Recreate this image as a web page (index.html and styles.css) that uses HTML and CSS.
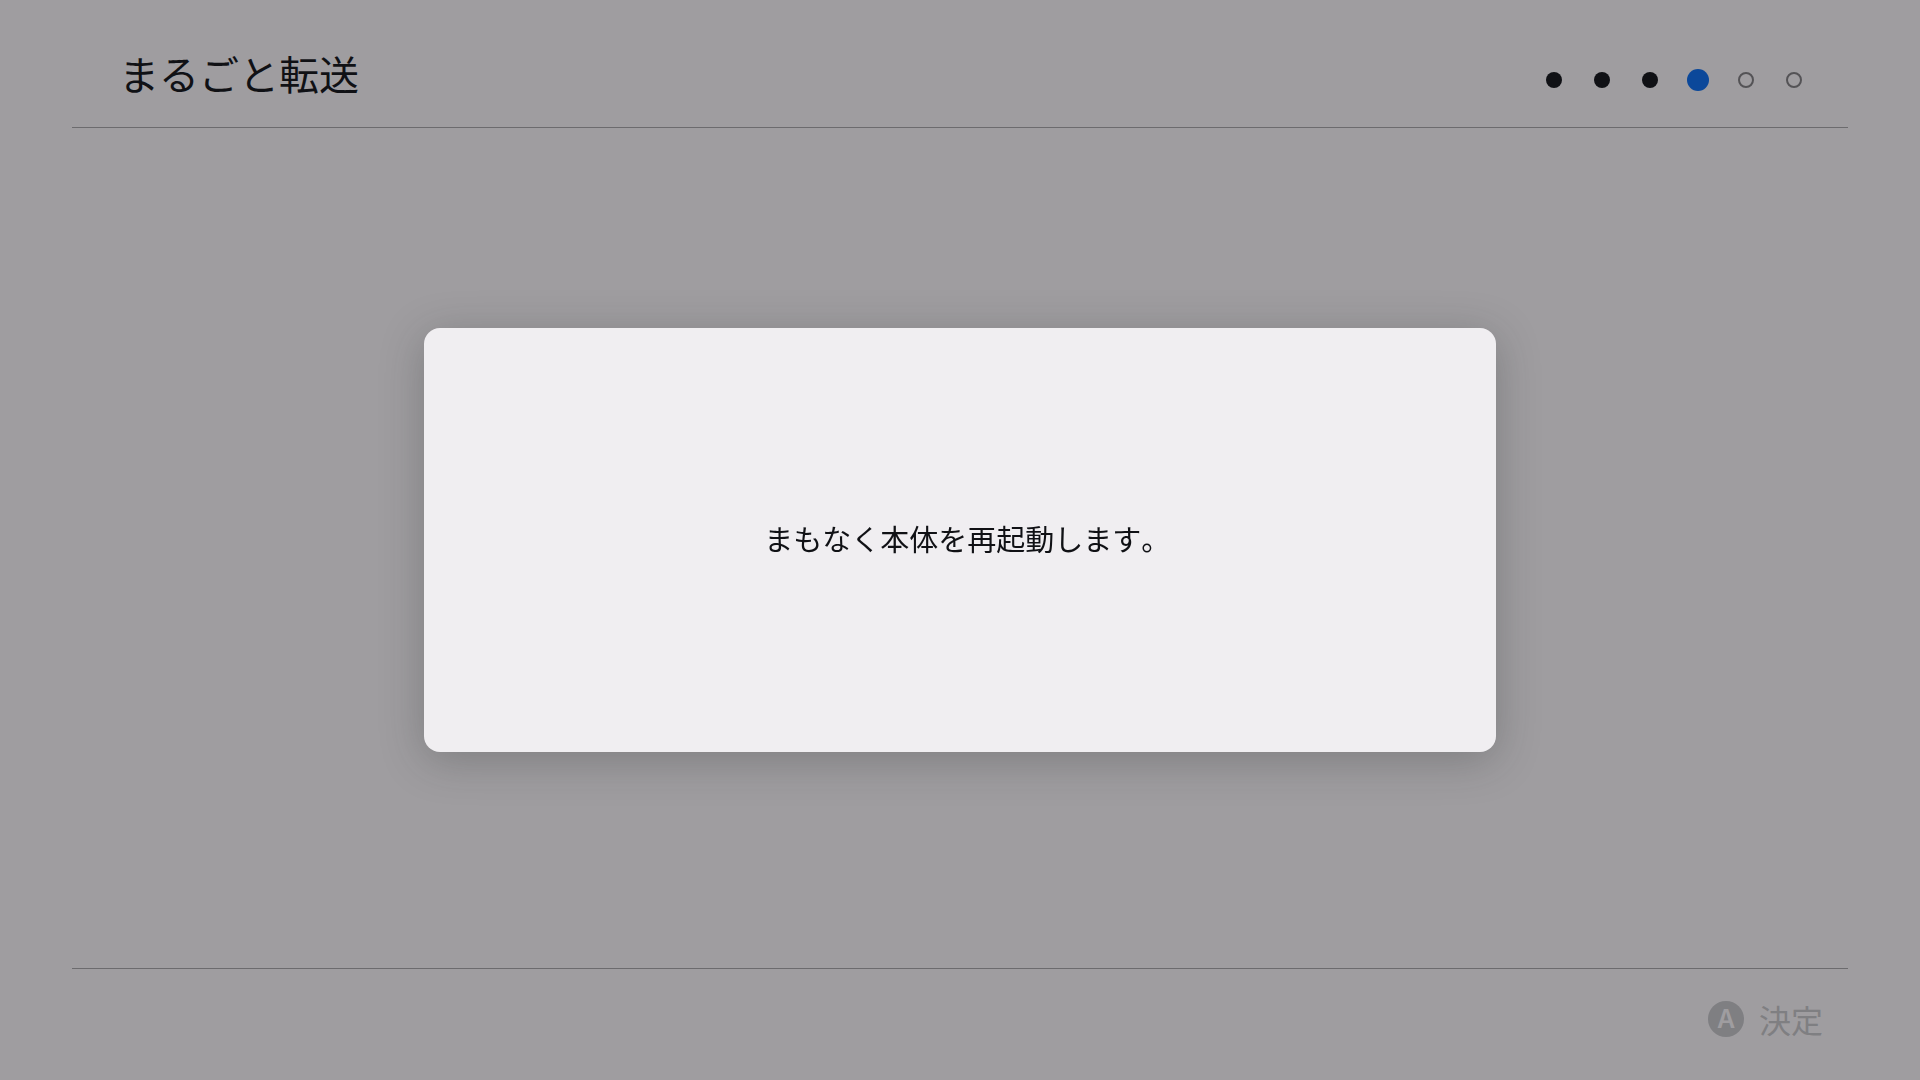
FILE: index.html
```
<!DOCTYPE html>
<html lang="ja">
  <head>
    <meta charset="utf-8">
    <meta name="viewport" content="width=device-width, initial-scale=1">
    <title>まるごと転送</title>
    <link rel="stylesheet" href="styles.css">
  </head>

  <body>
    <div class="screen">
      <header class="header">
        <h1 class="title">まるごと転送</h1>
        <ol class="steps">
          <li class="step done"></li>
          <li class="step done"></li>
          <li class="step done"></li>
          <li class="step current" aria-current="step"></li>
          <li class="step"></li>
          <li class="step"></li>
        </ol>
      </header>

      <main class="content"></main>

      <footer class="footer">
        <button class="action" type="button" disabled>
          <svg class="key" viewBox="0 0 36 36" aria-hidden="true">
            <circle cx="18" cy="18" r="18"/>
            <text x="18" y="27" text-anchor="middle">A</text>
          </svg>
          <span>決定</span>
        </button>
      </footer>
    </div>

    <div class="overlay">
      <div class="dialog" role="alertdialog" aria-modal="true" aria-labelledby="message">
        <p class="message" id="message">まもなく本体を再起動します<span class="stop">。</span></p>
      </div>
    </div>
  </body>
</html>
```

FILE: styles.css
```
body {
  margin: 0;
  background-color: #9f9da0;
  color: #101115;
  font-family: "Noto Sans CJK JP", sans-serif;
}

.screen {
  display: flex;
  flex-direction: column;
  min-height: 100vh;
  box-sizing: border-box;
  padding: 0 72px;
}

.header {
  display: flex;
  align-items: center;
  justify-content: space-between;
  box-sizing: border-box;
  height: 128px;
  padding: 18px 30px 0 47px;
  border-bottom: 1px solid #6c6b6e;
}

.title {
  margin: 0;
  font-size: 40px;
  font-weight: 400;
  line-height: 60px;
}

.steps {
  display: flex;
  align-items: center;
  margin: 0;
  padding: 14px 0 0;
  list-style: none;
}

.step {
  box-sizing: border-box;
  width: 16px;
  height: 16px;
  margin: 0 16px;
  border: 2px solid #545356;
  border-radius: 50%;
}

.step.done {
  border: 0;
  background-color: #101115;
}

.step.current {
  width: 22px;
  height: 22px;
  margin: 0 13px;
  border: 0;
  background-color: #0b489a;
}

.content {
  flex: 1;
}

.footer {
  display: flex;
  justify-content: flex-end;
  align-items: center;
  box-sizing: border-box;
  height: 112px;
  padding: 0 25px 12px;
  border-top: 1px solid #6c6b6e;
}

.action {
  display: flex;
  align-items: center;
  gap: 15px;
  padding: 0;
  border: 0;
  background: none;
  color: #7f7f82;
  font-family: inherit;
  font-size: 32px;
  line-height: 48px;
}

.key {
  width: 36px;
  height: 36px;
  fill: #7f7f82;
}

.key text {
  fill: #9f9da0;
  font-family: Inter, sans-serif;
  font-size: 25px;
  font-weight: 600;
}

.overlay {
  position: fixed;
  inset: 0;
  display: flex;
  align-items: center;
  justify-content: center;
}

.dialog {
  display: flex;
  align-items: center;
  justify-content: center;
  box-sizing: border-box;
  width: 90%;
  max-width: 1072px;
  min-height: 424px;
  padding-bottom: 4px;
  border-radius: 16px;
  background-color: #f0eef1;
  box-shadow: 0 8px 44px rgba(40, 44, 44, 0.28);
}

.message {
  margin: 0;
  font-size: 29px;
  line-height: 44px;
}

/* closing mark takes half a cell so the line centres on its text */
.stop {
  font-feature-settings: "halt";
}
```
